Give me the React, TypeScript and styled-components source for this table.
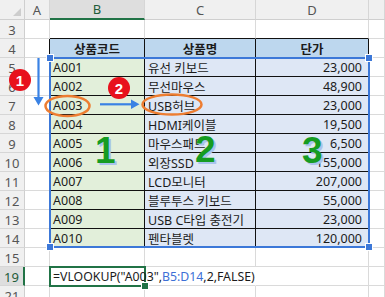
import React from 'react';
import styled, {createGlobalStyle} from 'styled-components';

const GlobalStyle = createGlobalStyle`
	html, body {
		margin: 0;
		padding: 0;
		background: #fff;
	}
	body {
		font-family: 'Noto Sans', 'Noto Sans CJK KR', sans-serif;
		overflow: hidden;
	}
`;

const GREEN = '#217346';
const BLUE = '#3c78d8';
const ORANGE = '#ed7d31';
const GRID = '#dadada';
const HEAD_BG = '#f0f0f0';
const HEAD_ACTIVE = '#dedede';

type Row = [string, string, string];

const products: Row[] = [
	['A001', '유선 키보드', '23,000'],
	['A002', '무선마우스', '48,900'],
	['A003', 'USB허브', '23,000'],
	['A004', 'HDMI케이블', '19,500'],
	['A005', '마우스패드', '6,500'],
	['A006', '외장SSD', '155,000'],
	['A007', 'LCD모니터', '207,000'],
	['A008', '블루투스 키보드', '55,000'],
	['A009', 'USB C타입 충전기', '23,000'],
	['A010', '펜타블렛', '120,000'],
];

const Sheet = styled.div`
	position: relative;
	display: grid;
	grid-template-columns: 25px 25px 95px 111px 113px 16px;
	grid-template-rows: 20px;
	grid-auto-rows: 19px;
	width: 385px;
	height: 297px;
	overflow: hidden;
	font-size: 12.5px;
	color: #1b1b1b;
`;

const Corner = styled.div`
	position: relative;
	background: ${HEAD_BG};
	border-right: 1px solid #cfcfcf;
	border-bottom: 1px solid #cfcfcf;

	&::after {
		content: '';
		position: absolute;
		right: 3px;
		bottom: 3px;
		border-style: solid;
		border-width: 0 0 8px 8px;
		border-color: transparent transparent #cdcdcd transparent;
	}
`;

const ColHeader = styled.div<{$active?: boolean}>`
	display: flex;
	align-items: center;
	justify-content: center;
	background: ${(p) => (p.$active ? HEAD_ACTIVE : HEAD_BG)};
	border-right: 1px solid #d6d6d6;
	border-bottom: ${(p) => (p.$active ? `2px solid ${GREEN}` : '1px solid #cfcfcf')};
	color: ${(p) => (p.$active ? '#1f5c3a' : '#555')};
	font-size: 13px;
`;

const RowHeader = styled.div<{$active?: boolean}>`
	display: flex;
	align-items: center;
	justify-content: center;
	padding-top: 2px;
	box-sizing: border-box;
	background: ${(p) => (p.$active ? HEAD_ACTIVE : HEAD_BG)};
	border-right: ${(p) => (p.$active ? `2px solid ${GREEN}` : '1px solid #cfcfcf')};
	border-bottom: 1px solid #d6d6d6;
	color: ${(p) => (p.$active ? '#1f5c3a' : '#555')};
	font-size: 13px;
`;

type Edge = 'grid' | 'dark' | 'none';

const Cell = styled.div<{
	$bg?: string;
	$align?: 'left' | 'center' | 'right';
	$bold?: boolean;
	$right?: Edge;
	$bottom?: Edge;
}>`
	display: flex;
	align-items: center;
	justify-content: ${(p) =>
		p.$align === 'right' ? 'flex-end' : p.$align === 'center' ? 'center' : 'flex-start'};
	padding: 1px ${(p) => (p.$align === 'right' ? '6px' : '3px')} 0 3px;
	box-sizing: border-box;
	min-width: 0;
	white-space: nowrap;
	background: ${(p) => p.$bg || 'transparent'};
	font-weight: ${(p) => (p.$bold ? 700 : 400)};
	border-right: ${(p) =>
		p.$right === 'dark' ? '1px solid #111' : p.$right === 'none' ? '1px solid transparent' : `1px solid ${GRID}`};
	border-bottom: ${(p) => (p.$bottom === 'dark' ? '1px solid #111' : `1px solid ${GRID}`)};
`;

const Formula = styled.span`
	position: relative;
	z-index: 1;
	font-size: 12.3px;
`;

const Ref = styled.span`
	color: #3d6fd6;
`;

// formula reference highlight around B5:D14
const RangeBox = styled.div`
	position: absolute;
	left: 49px;
	top: 57px;
	width: 321px;
	height: 191px;
	box-sizing: border-box;
	border: 2px solid ${BLUE};
	pointer-events: none;
`;

type CornerPos = 'tl' | 'tr' | 'bl' | 'br';

const Handle = styled.div<{$at: CornerPos; $color: string}>`
	position: absolute;
	${(p) => (p.$at[0] === 't' ? 'top: -4px;' : 'bottom: -4px;')}
	${(p) => (p.$at[1] === 'l' ? 'left: -4px;' : 'right: -4px;')}
	width: 6px;
	height: 6px;
	background: ${(p) => p.$color};
	outline: 1px solid #fff;
`;

const ActiveBox = styled.div`
	position: absolute;
	left: 49px;
	top: 266px;
	width: 97px;
	height: 21px;
	box-sizing: border-box;
	border: 2px solid ${GREEN};
`;

const Badge = styled.div<{$x: number; $y: number}>`
	position: absolute;
	left: ${(p) => p.$x - 11}px;
	top: ${(p) => p.$y - 11}px;
	width: 22px;
	height: 22px;
	border-radius: 50%;
	background: #e8111c;
	color: #fff;
	display: flex;
	align-items: center;
	justify-content: center;
	font-family: 'Liberation Sans', Arial, sans-serif;
	font-weight: 700;
	font-size: 15px;
	z-index: 3;
`;

const BigNumber = styled.div<{$x: number; $y: number}>`
	position: absolute;
	left: ${(p) => p.$x}px;
	top: ${(p) => p.$y}px;
	font-family: 'Liberation Sans', Arial, sans-serif;
	font-weight: 700;
	font-size: 37px;
	line-height: 1;
	color: #169c22;
	text-shadow: 2px 2px 0 #a9c3ec;
	z-index: 3;
`;

const Drawing = styled.svg`
	position: absolute;
	left: 0;
	top: 0;
	z-index: 2;
	pointer-events: none;
`;

const rowNumbers = [3, 4, 5, 6, 7, 8, 9, 10, 11, 12, 13, 14, 15, 19, 21];

const App: React.FC = () => {
	return (
		<>
			<GlobalStyle />
			<Sheet>
				<Corner />
				<ColHeader>A</ColHeader>
				<ColHeader $active>B</ColHeader>
				<ColHeader>C</ColHeader>
				<ColHeader>D</ColHeader>
				<ColHeader />

				{rowNumbers.map((n) => {
					const inTable = n >= 4 && n <= 14;
					const item = n >= 5 && n <= 14 ? products[n - 5] : null;
					const isHead = n === 4;
					const bottomDark: Edge = n === 3 || inTable ? 'dark' : 'grid';
					return (
						<React.Fragment key={n}>
							<RowHeader $active={n === 19}>{n}</RowHeader>
							<Cell $right={inTable ? 'dark' : 'grid'} />
							{isHead ? (
								<>
									<Cell $bg="#bdd7ee" $align="center" $bold $right="dark" $bottom="dark">
										상품코드
									</Cell>
									<Cell $bg="#bdd7ee" $align="center" $bold $right="dark" $bottom="dark">
										상품명
									</Cell>
									<Cell $bg="#bdd7ee" $align="center" $bold $right="dark" $bottom="dark">
										단가
									</Cell>
								</>
							) : item ? (
								<>
									<Cell $bg="#e2efda" $right="dark" $bottom="dark">
										{item[0]}
									</Cell>
									<Cell $bg="#dee7f5" $right="dark" $bottom="dark">
										{item[1]}
									</Cell>
									<Cell $bg="#dee7f5" $align="right" $right="dark" $bottom="dark">
										{item[2]}
									</Cell>
								</>
							) : n === 19 ? (
								<>
									<Cell $right="none">
										<Formula>
											=VLOOKUP("A003",<Ref>B5:D14</Ref>,2,FALSE)
										</Formula>
									</Cell>
									<Cell $right="none" />
									<Cell />
								</>
							) : (
								<>
									<Cell $bottom={bottomDark} />
									<Cell $bottom={bottomDark} />
									<Cell $bottom={bottomDark} />
								</>
							)}
							<Cell />
						</React.Fragment>
					);
				})}

				<RangeBox>
					<Handle $at="tl" $color={BLUE} />
					<Handle $at="tr" $color={BLUE} />
					<Handle $at="bl" $color={BLUE} />
					<Handle $at="br" $color={BLUE} />
				</RangeBox>

				<ActiveBox>
					<Handle $at="br" $color={GREEN} />
				</ActiveBox>

				<Drawing width={385} height={297} viewBox="0 0 385 297">
					<line x1={38.5} y1={58} x2={38.5} y2={98} stroke="#3a82e4" strokeWidth={2.2} />
					<polygon points="33.5,97 43.5,97 38.5,105.5" fill="#3a82e4" />
					<line x1={100} y1={104.3} x2={132} y2={104.3} stroke="#3a82e4" strokeWidth={2.2} />
					<polygon points="131,99.5 131,109 139.5,104.3" fill="#3a82e4" />
					<ellipse cx={67.5} cy={106} rx={22} ry={10} fill="none" stroke={ORANGE} strokeWidth={2.5} />
					<ellipse cx={172} cy={104.5} rx={29.5} ry={10} fill="none" stroke={ORANGE} strokeWidth={2.5} />
				</Drawing>

				<Badge $x={20} $y={80}>1</Badge>
				<Badge $x={119} $y={88}>2</Badge>

				<BigNumber $x={95} $y={132}>1</BigNumber>
				<BigNumber $x={195} $y={131}>2</BigNumber>
				<BigNumber $x={302} $y={132}>3</BigNumber>
			</Sheet>
		</>
	);
};

export default App;
